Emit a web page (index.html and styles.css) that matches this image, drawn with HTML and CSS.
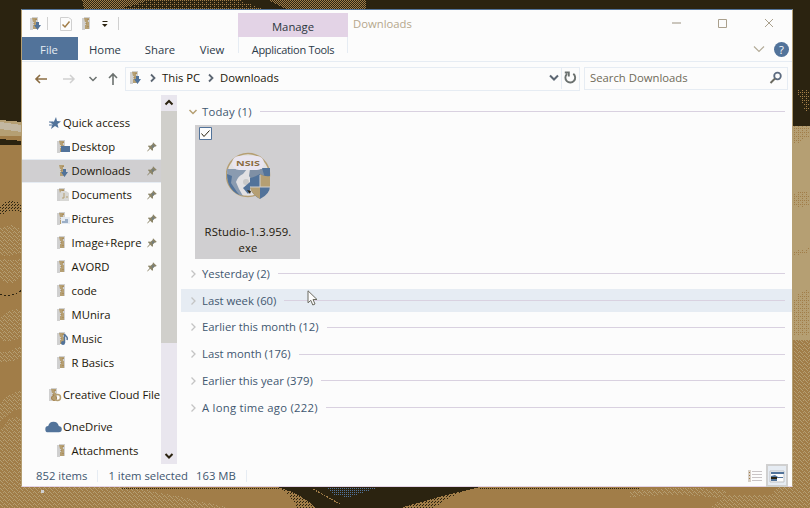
FILE: index.html
```
<!DOCTYPE html>
<html lang="en">
<head>
<meta charset="utf-8">
<title>Downloads</title>
<link rel="stylesheet" href="styles.css">
</head>
<body>
<svg class="wallpaper" width="810" height="508" viewBox="0 0 810 508" shape-rendering="crispEdges" aria-hidden="true">
  <defs>
    <pattern id="grain" width="5" height="4" patternUnits="userSpaceOnUse"><path d="M0 0h1v1H0zM2 2h1v1H2zM3 0h1v1H3zM4 3h1v1H4zM1 1h1v1H1z" fill="#b59f73"/></pattern>
    <pattern id="dots" width="4" height="4" patternUnits="userSpaceOnUse"><path d="M0 0h1v1H0zM2 2h1v1H2zM2 0h1v1H2z" fill="#a17d48"/></pattern>
    <pattern id="dense" width="2" height="2" patternUnits="userSpaceOnUse"><path d="M0 0h1v1H0zM1 1h1v1H1z" fill="#a17d48"/></pattern>
    <pattern id="shade" width="3" height="3" patternUnits="userSpaceOnUse"><path d="M0 0h1v1H0zM2 1h1v1H2z" fill="#2b2310"/></pattern>
    <pattern id="blue" width="2" height="2" patternUnits="userSpaceOnUse"><path d="M0 0h1v1H0z" fill="#52739a"/></pattern>
  </defs>
  <rect width="810" height="508" fill="#a17d48"/>
  <rect width="810" height="126" fill="#2b2310"/>
  <path d="M82 0H240L262 9H84z" fill="url(#dots)"/><path d="M82 0H150L120 9H84z" fill="url(#dense)"/><path d="M268 0H366V9H286z" fill="url(#dense)"/>
  <path d="M0 120l22 2v14H0z" fill="#b59f73"/><path d="M0 122l22 3v7l-22-3z" fill="#d0d0d0" opacity=".5"/>
  <path d="M0 139l22 2v4l-22 0z" fill="#2b2310"/><path d="M0 205q12-8 22 0v8q-14-6-22 4z" fill="url(#shade)"/>
  <path d="M0 228q14-6 22 2v22q-12 6-22 4zM0 258q12 4 22 0v18q-10 12-22 4zM0 318q12-12 22-8v26q-12 8-22 4zM0 352q12 0 22-8v12q-10 8-22 6zM0 404q14-16 22-12v16q-12 4-22 14z" fill="url(#grain)"/>
  <path d="M0 430Q12 412 22 418V486L0 508z" fill="url(#grain)"/>
  <path d="M0 294q10 4 22-4" fill="none" stroke="#2b2310" stroke-dasharray="2 2"/>
  <path d="M792 126H810V340H792z" fill="#b59f73"/><path d="M792 126H810V136l-14 8h-4zM794 194q9-5 16 0v10q-8 5-16 2zM794 251l16-3v4l-16 4zM794 300q8-12 16-10v45h-16z" fill="url(#dots)"/>
  <path d="M796 90h14v22h-4z" fill="url(#dots)"/>
  <path d="M794 335H810V508H760Q794 480 794 400z" fill="url(#grain)"/>
  <path d="M22 487H130Q180 496 230 508H0V497zM630 491q60-6 100 0l-10 7q-40-5-90-1zM725 495h85v13H710z" fill="url(#grain)"/>
  <path d="M278 487H480Q440 496 400 508H316Q302 494 278 487z" fill="#2b2310"/>
  <path d="M278 487q30 6 40 21h-22q-4-14-18-21zM478 487q-46 9-84 21h40q16-14 44-21z" fill="url(#shade)"/>
  <path d="M326 488H376L350 497 336 496z" fill="url(#blue)"/><path d="M313 489l27 15" stroke="#a17d48" stroke-dasharray="2 1"/>
  <path d="M122 488.500H280M480 488.500H640" stroke="#2b2310" stroke-dasharray="1 1"/>
  <path d="M41 490h3v3h-3z" fill="#d0d0d0"/>
</svg>

<svg class="symbols" width="0" height="0" aria-hidden="true">
  <symbol id="folder" viewBox="0 0 16 16"><path d="M3 2h2V1h6v12H6v1H3z" fill="#d0d0d0"/><path d="M5 2h5v2H9v2h1v7H6V9h1V6H6z" fill="#b59f73"/><path d="M8 3h2v1H8zM6 7h2v1H6zM8 10h2v1H8z" fill="#a17d48" opacity=".5"/></symbol>
  <symbol id="arrow-down" viewBox="0 0 16 16"><path d="M9 6h3v3h2l-3.500 5L7 9h2z" fill="#52739a"/></symbol>
  <symbol id="chev-down" viewBox="0 0 10 10"><path d="M1.500 3L5 6.500 8.500 3" fill="none" stroke="currentColor" stroke-width="1.500"/></symbol>
  <symbol id="chev-right" viewBox="0 0 10 10"><path d="M3.500 1.500L7 5 3.500 8.500" fill="none" stroke="currentColor" stroke-width="1.300"/></symbol>
  <symbol id="pin" viewBox="0 0 10 10"><path d="M6 .3l3.700 3.500-.8.800-1-.2-1.900 1.900v2l-.8.400-2-2L.6 9.400l-.4-.4L2.700 6.100 1 4.300l.5-.7 2 .2L5.600 2z" fill="#8c8568"/><path d="M5.500 2.500l2 1.700L5 6.500" fill="#52739a" opacity=".5"/></symbol>
</svg>

<main class="window">
  <header class="titlebar">
    <div class="quickbar">
      <svg class="i16"><use href="#folder"/><use href="#arrow-down"/></svg>
      <i class="sep"></i>
      <svg class="i16 check" viewBox="0 0 16 16"><path d="M2.500 1.500h8l3 2v11h-11z" fill="#fcfcfc" stroke="#d0d0d0"/><path d="M4.500 8.500L7 11l4.500-5.500" fill="none" stroke="#a17d48" stroke-width="1.500"/></svg>
      <svg class="i16 blank"><use href="#folder"/></svg>
      <svg class="more" viewBox="0 0 8 8"><path d="M1.500 1.500h5" stroke="#2b2310"/><path d="M1 4h5.500L3.800 7z" fill="#2b2310"/></svg>
      <i class="sep last"></i>
    </div>
    <div class="manage">Manage</div>
    <div class="title">Downloads</div>
    <div class="controls">
      <svg viewBox="0 0 10 10"><path d="M0 5h9" stroke="#cbc6bd" stroke-width="2"/></svg>
      <svg viewBox="0 0 10 10"><path d="M.5 1.500h8v8h-8z" fill="none" stroke="#aaa08d"/></svg>
      <svg viewBox="0 0 10 10"><path d="M1 1l8 8M9 1L1 9" stroke="#aaa08d"/></svg>
    </div>
  </header>
  <nav class="ribbon">
    <span class="tab file">File</span><span class="tab home">Home</span><span class="tab share">Share</span><span class="tab view">View</span>
    <span class="tab tools">Application Tools</span>
    <svg class="expand" viewBox="0 0 12 8"><path d="M1 1.500L6 6.500 11 1.500" fill="none" stroke="#b3ab98" stroke-width="1.200"/></svg>
    <span class="help">?</span>
  </nav>
  <div class="navrow">
    <svg class="i14 back" viewBox="0 0 14 14"><path d="M13 7H2M6 3L2 7l4 4" fill="none" stroke="#8a6c42" stroke-width="1.600"/></svg>
    <svg class="i14 forward" viewBox="0 0 14 14"><path d="M1 7h11M8 3l4 4-4 4" fill="none" stroke="#d0d0d0" stroke-width="1.500"/></svg>
    <svg class="i10 recent"><use href="#chev-down"/></svg>
    <svg class="i14 up" viewBox="0 0 14 14"><path d="M7 13V2M3 6l4-4 4 4" fill="none" stroke="#6b716f" stroke-width="1.600"/></svg>
    <div class="address">
      <svg class="i16"><use href="#folder"/><use href="#arrow-down"/></svg>
      <svg class="i10 crumb" viewBox="0 0 10 10"><path d="M3 1.500L6.500 5 3 8.500" fill="none" stroke="#5c6672" stroke-width="1.800"/></svg><span class="pc">This PC</span>
      <svg class="i10 crumb" viewBox="0 0 10 10"><path d="M3 1.500L6.500 5 3 8.500" fill="none" stroke="#5c6672" stroke-width="1.800"/></svg><span class="here">Downloads</span>
      <svg class="i10 drop" viewBox="0 0 10 10"><path d="M1 2.500L5 6.500 9 2.500" fill="none" stroke="#5c6672" stroke-width="2"/></svg>
      <div class="refresh"><svg class="i14" viewBox="0 0 14 14"><path d="M10.300 2.800A4.900 4.900 0 1 1 4 3M1.800 1.500v0h4v4" fill="none" stroke="#6b716f" stroke-width="1.900"/></svg></div>
    </div>
    <div class="search"><span>Search Downloads</span><svg class="i14" viewBox="0 0 14 14"><circle cx="8.500" cy="5" r="3.300" fill="none" stroke="#5c6b80" stroke-width="1.800"/><path d="M6 7.500L1.500 12" stroke="#6b6a60" stroke-width="2"/></svg></div>
  </div>
  <section class="body">
    <aside class="tree">
      <div class="row root"><svg class="i14" viewBox="0 0 14 14"><path d="M8 1l1 4 4 .5-3.500 2.500 1 4L7 10l-4 3 1.500-5L2 6.500l4-1z" fill="#52739a"/><path d="M1 6h4M1 9h3" stroke="#52739a"/></svg><span>Quick access</span></div>
      <div class="row"><svg class="i16"><use href="#folder"/><path d="M7 7h9v6H7z" fill="#52739a"/></svg><span>Desktop</span><svg class="i10"><use href="#pin"/></svg></div>
      <div class="row selected"><svg class="i16"><use href="#folder"/><use href="#arrow-down"/></svg><span>Downloads</span><svg class="i10"><use href="#pin"/></svg></div>
      <div class="row"><svg class="i16"><use href="#folder"/><path d="M7 4h5l3 2v8H6V6z" fill="#d8d8d5"/><path d="M10 6v5m-2 0h2m2-1h2" stroke="#b59f73"/></svg><span>Documents</span><svg class="i10"><use href="#pin"/></svg></div>
      <div class="row"><svg class="i16"><use href="#folder"/><path d="M7 6h9v7H7z" fill="#e6ecf3"/><path d="M8 11h6M11 9h3" stroke="#52739a"/></svg><span>Pictures</span><svg class="i10"><use href="#pin"/></svg></div>
      <div class="row"><svg class="i16"><use href="#folder"/></svg><span>Image+Repre</span><svg class="i10"><use href="#pin"/></svg></div>
      <div class="row"><svg class="i16"><use href="#folder"/></svg><span>AVORD</span><svg class="i10"><use href="#pin"/></svg></div>
      <div class="row"><svg class="i16"><use href="#folder"/></svg><span>code</span></div>
      <div class="row"><svg class="i16"><use href="#folder"/></svg><span>MUnira</span></div>
      <div class="row"><svg class="i16"><use href="#folder"/><path d="M10.500 12V3c1 3 4 2 2.500 6" fill="none" stroke="#52739a" stroke-width="1.500"/><circle cx="9" cy="12" r="2" fill="#52739a"/></svg><span>Music</span></div>
      <div class="row"><svg class="i16"><use href="#folder"/></svg><span>R Basics</span></div>
      <div class="row root cloudfile"><svg class="i16"><use href="#folder"/><circle cx="8" cy="11" r="2.500" fill="#b59f73" stroke="#a17d48"/><circle cx="11.500" cy="10.500" r="3" fill="none" stroke="#b59f73" stroke-width="1.500"/></svg><span>Creative Cloud File</span></div>
      <div class="row root onedrive"><svg class="cloud" viewBox="0 0 16 11"><path d="M3 10.500Q.3 10.500.3 7.500T3 4.500Q4 .5 8 .5t5 4q2.800.5 2.800 3t-2.800 3z" fill="#52739a"/></svg><span>OneDrive</span></div>
      <div class="row"><svg class="i16"><use href="#folder"/></svg><span>Attachments</span></div>
    </aside>
    <div class="scrollbar">
      <svg class="btn" viewBox="0 0 16 16"><path d="M4.500 9.500L8 6l3.500 3.500" fill="none" stroke="#2b2310" stroke-width="2"/></svg>
      <div class="thumb"></div>
      <svg class="btn end" viewBox="0 0 16 16"><path d="M4.500 6L8 9.500 11.500 6" fill="none" stroke="#2b2310" stroke-width="2"/></svg>
    </div>
    <div class="files">
      <div class="group open"><svg class="i10"><use href="#chev-down"/></svg><span>Today (1)</span><hr></div>
      <div class="tile">
        <svg class="box" viewBox="0 0 13 13"><path d="M.5.5h12v12H.5z" fill="#fcfcfc" stroke="#52739a"/><path d="M2.500 6.500L5 9.500l5.500-6" fill="none" stroke="#2b2310"/></svg>
        <svg class="globe" viewBox="0 0 46 48">
          <circle cx="22" cy="23" r="21.500" fill="#e2e1e3" stroke="#b59f73" stroke-width="1.500"/>
          <path d="M1 17h20l-4 5q-5 2-7 8l3 7 4 7Q1 40 1 17z" fill="#8a9bb0"/>
          <path d="M1 22l5 2-1 7 6 9q2 3 5 4Q1 39 1 22z" fill="#52739a"/>
          <path d="M24 17h20v10H32l-5 3-4-6z" fill="#7f90a5"/><path d="M36 16h8v10h-5z" fill="#52739a"/>
          <circle cx="20" cy="30" r="3" fill="#c9c9c9"/>
          <rect x="6" y="4" width="32" height="14" rx="7" fill="#e9e5f0"/>
          <text x="22" y="13.500" text-anchor="middle" textLength="24" lengthAdjust="spacingAndGlyphs">NSIS</text>
          <path d="M34 22q5 3 10 2v10q0 8-10 13-9-5-10-13V26q5-1 10-4z" fill="#52739a"/>
          <path d="M34 22q5 3 10 2v11H34zM34 35v12q-9-5-10-12z" fill="#b59f73"/>
          <path d="M17 36l7-6v9l-2 3z" fill="#52739a"/><path d="M21 38l4 1-1 3z" fill="#2b2310"/><path d="M34 23v12M24 35h20" stroke="#d0d0d0"/>
        </svg>
        <div class="name">RStudio-1.3.959.<br>exe</div>
      </div>
      <div class="group"><svg class="i10"><use href="#chev-right"/></svg><span>Yesterday (2)</span><hr></div>
      <div class="group hover"><svg class="i10"><use href="#chev-right"/></svg><span>Last week (60)</span><hr></div>
      <div class="group"><svg class="i10"><use href="#chev-right"/></svg><span>Earlier this month (12)</span><hr></div>
      <div class="group"><svg class="i10"><use href="#chev-right"/></svg><span>Last month (176)</span><hr></div>
      <div class="group"><svg class="i10"><use href="#chev-right"/></svg><span>Earlier this year (379)</span><hr></div>
      <div class="group oldest"><svg class="i10"><use href="#chev-right"/></svg><span>A long time ago (222)</span><hr></div>
    </div>
  </section>
  <footer class="status">
    <span class="count">852 items</span><i></i><span class="picked">1 item selected</span><span class="size">163 MB</span><i></i>
    <svg class="details" viewBox="0 0 16 14"><path d="M1 1h3v12H1z" fill="#d8d0c8"/><path d="M5 2.500h10M5 5.500h10M5 8.500h10M5 11.500h10" stroke="#c9c4c6"/><path d="M2 3h1v1H2zM2 6h1v1H2zM2 9h1v1H2z" fill="#a17d48"/></svg>
    <svg class="thumbs" viewBox="0 0 22 23"><path d="M1 1h20v21H1z" fill="#e6ecf3" stroke="#d0d0d0" stroke-width="2"/><path d="M4 7h14v11H4z" fill="#fcfcfc" stroke="#c0c2c5"/><path d="M5 8h13v2H5zM5 12l4-1 3 2h5v1h-6v3H5z" fill="#52739a"/><path d="M5 13h6v2H5z" fill="#2b2310"/></svg>
  </footer>
</main>
<svg class="cursor" viewBox="0 0 12 16"><path d="M1 .8v12l2.800-2.500 2 4.700 2.200-1-2-4.500h4z" fill="#fcfcfc" stroke="#6b6a60"/></svg>
</body>
</html>
```

FILE: styles.css
```
* { box-sizing: border-box; }
body {
  margin: 0; width: 810px; height: 508px; overflow: hidden;
  padding: 9px 17px 21px 21px;
  font: 11.3px/16px "Open Sans", "Noto Sans", sans-serif; color: #1c170a;
}
svg { display: block; flex: none; }
.wallpaper { position: absolute; inset: 0; z-index: -1; }
.symbols { position: absolute; }
.window {
  width: 772px; height: 478px; display: flex; flex-direction: column;
  background: #fcfcfc; border: 1px solid #b59f73; border-top-color: #52739a; border-bottom-color: #e3d3e6;
  white-space: nowrap;
}
.i16 { width: 16px; height: 16px; }
.i14 { width: 14px; height: 14px; }
.i10 { width: 10px; height: 10px; }

.titlebar { height: 27px; display: flex; flex: none; }
.quickbar { width: 216px; display: flex; align-items: center; padding-left: 5px; }
.sep { width: 1px; height: 13px; background: #d0d0d0; margin-left: 4px; }
.check { margin-left: 10px; }
.blank { margin-left: 5px; }
.more { width: 8px; height: 8px; margin-left: 6px; }
.sep.last { margin-left: 9px; }
.manage { width: 110px; margin-top: 3px; padding-top: 6px; background: #e3d3e6; text-align: center; color: #2c3640; }
.title { margin-left: 5px; padding-top: 6px; color: #b5a78c; }
.controls { margin-left: auto; display: flex; gap: 36px; padding: 8px 18px 0 0; }
.controls svg { width: 10px; height: 10px; }

.ribbon { height: 25px; flex: none; display: flex; border-bottom: 1px solid #e6ecf3; line-height: 26px; color: #2c3a48; }
.tab { text-align: center; }
.file { width: 56px; height: 23px; background: #52739a; color: #e6ecf3; padding-right: 2px; }
.home { width: 54px; }
.share { width: 56px; }
.view { width: 50px; padding-right: 2px; }
.tools { width: 110px; height: 16px; border: solid #e6ecf3; border-width: 0 1px; font-size: 11px; letter-spacing: -.3px; }
.expand { width: 12px; height: 8px; margin: 8px 0 0 auto; }
.help { width: 15px; height: 15px; margin: 5px 3px 0 9px; border-radius: 50%; background: #52739a; color: #fcfcfc; line-height: 15px; text-align: center; }

.navrow { height: 33px; flex: none; display: flex; align-items: center; padding: 0 4px 0 12px; }
.navrow > svg { position: relative; top: 0; }
.forward { margin-left: 14px; }
.recent { margin-left: 12px; color: #6b716f; }
.up { margin-left: 8px; }
.address { width: 455px; height: 24px; margin-left: 5px; border: 1px solid #e6ecf3; display: flex; align-items: center; padding: 0 0 1px 1px; }
.crumb { margin: 0 4px 0 5px; }
.pc { width: 39px; }
.drop { margin-left: auto; }
.refresh { width: 18px; height: 22px; margin-left: 2px; padding: 4px 1px; border-left: 1px solid #e6ecf3; }
.search { width: 204px; height: 23px; margin-left: auto; border: 1px solid #e6ecf3; display: flex; align-items: center; justify-content: space-between; padding: 0 4px 1px 5px; color: #6f6a58; }

.body { height: 369px; flex: none; display: flex; }
.tree { width: 139px; padding-top: 16px; overflow: hidden; }
.row { height: 24px; display: flex; align-items: center; padding-left: 32px; }
.row .i16 { margin-right: 1.500px; }
.row .i10 { margin: 0 4px 0 auto; }
.row.root { padding-left: 26px; }
.root .i14 { margin-right: 1px; }
.selected { background: #d0cfd1; border: solid #e6ecf3; border-width: 1px 0; }
.row.root.cloudfile { margin-top: 8px; padding-left: 24px; letter-spacing: -.02px; }
.cloudfile .i16 { margin-right: 1px; }
.row.root.onedrive { margin-top: 8px; padding-left: 23px; }
.cloud { width: 17px; height: 12px; margin-right: 1px; }
.scrollbar { width: 16px; background: #e9e6ee; display: flex; flex-direction: column; }
.btn { width: 16px; height: 16px; }
.thumb { height: 232px; background: #d0cfcb; }
.end { margin-top: auto; }

.files { width: 611px; margin-left: 4px; padding-top: 5px; color: #3f5770; }
.group { height: 23px; margin-bottom: 3.75px; display: flex; align-items: center; padding: 0 7px 0 7px; }
.group .i10 { margin-right: 4px; color: #c4c4c4; }
.group.open { margin-bottom: 2px; }
.group.open .i10 { color: #b59f73; }
.group.open span { letter-spacing: .2px; }
.group.oldest span { letter-spacing: .25px; }
.group hr { flex: 1; height: 1px; margin: 0 0 0 8px; border: 0; background: #d9d1e0; }
.hover { background: #e6ecf3; }
.tile { width: 105px; height: 134px; margin: 0 0 3.300px 14px; background: #d0cfd1; color: #1c170a; text-align: center; padding: 2px 0 0 4px; }
.box { width: 13px; height: 13px; }
.globe { width: 46px; height: 48px; margin: 12px 0 0 27px; }
.globe text { font: bold 7px "Open Sans", sans-serif; fill: #8a6c42; }
.name { margin: 24px 3px 0 0; letter-spacing: .08px; }

.status { flex: 1; display: flex; align-items: center; color: #3f5770; padding: 0 4px 0 14px; }
.status i { width: 1px; height: 12px; background: #e6ecf3; margin: 0 10px; }
.size { margin-left: 8px; }
.details { width: 16px; height: 14px; margin-left: auto; }
.thumbs { width: 22px; height: 23px; margin-left: 3px; }
.cursor { position: absolute; left: 307px; top: 290px; width: 12px; height: 16px; }
```
